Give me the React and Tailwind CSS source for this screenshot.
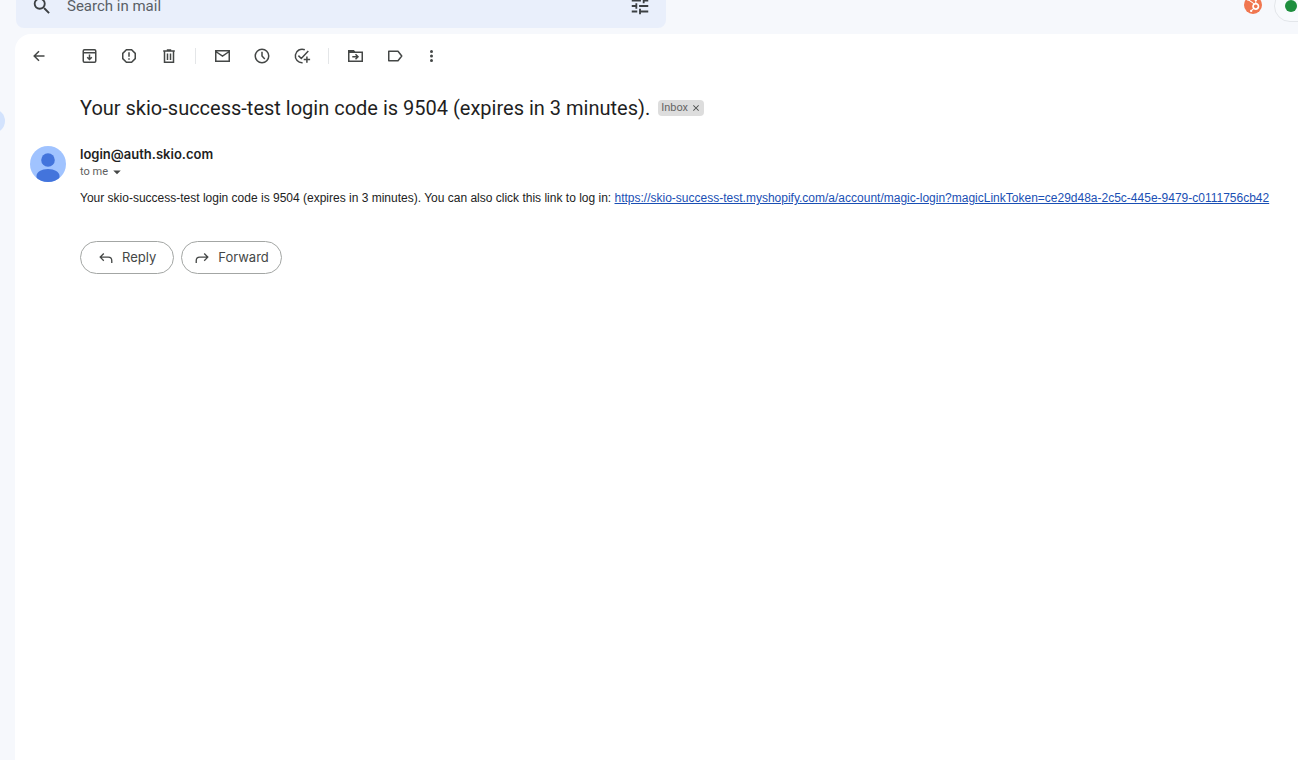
import React, { useState } from "react";
import { FaHubspot } from "react-icons/fa";
import { MdSearch, MdTune, MdArrowDropDown, MdClose } from "react-icons/md";

const Icon = ({ children, size = "size-[18px]" }) => (
  <svg
    viewBox="0 0 18 18"
    className={`${size} shrink-0`}
    fill="none"
    stroke="currentColor"
    strokeWidth="1.5"
    aria-hidden="true"
  >
    {children}
  </svg>
);

const BackIcon = () => (
  <Icon>
    <path d="M14.5 9H4.2M9 4.2L4.2 9 9 13.8" />
  </Icon>
);

const ArchiveIcon = () => (
  <Icon>
    <rect x="3.25" y="2.75" width="12.5" height="12.5" rx="1.2" />
    <path d="M3.25 5.75h12.5M9.5 7.6v4.6M7.2 10.2l2.3 2.2 2.3-2.2" />
  </Icon>
);

const SpamIcon = () => (
  <Icon>
    <path d="M6.4 2.75h5.2l3.65 3.65v5.2l-3.65 3.65H6.4L2.75 11.6V6.4L6.4 2.75zM9 5.2v4.6M9 11.2v1.6" />
  </Icon>
);

const TrashIcon = () => (
  <Icon>
    <path d="M4.5 4.5v10.75h9V4.5M3.2 4h11.6M6.8 3h4.4M7.5 6.5v6.5M10.5 6.5v6.5" />
  </Icon>
);

const MailIcon = () => (
  <Icon>
    <path d="M2.75 3.75h13.5v10.5H2.75zM2.75 4.5L9.5 9l6.75-4.5" />
  </Icon>
);

const ClockIcon = () => (
  <Icon>
    <circle cx="9" cy="9" r="6.75" />
    <path d="M9 4.8V9l2.8 2.9" />
  </Icon>
);

const TaskIcon = () => (
  <Icon>
    <path d="M11.8 2.8A6.75 6.75 0 1 0 9.6 15.7M5.4 8.6l2.9 2.9 7-7.6M13.9 9.4v6.4M10.7 12.6h6.4" />
  </Icon>
);

const MoveIcon = () => (
  <Icon>
    <path d="M2.75 5.25h13.5v9H2.75V3.75H7.5L9 5.25M6.3 9.8h5.4M9.5 7.3l2.5 2.5-2.5 2.5" />
    <path d="M2.5 3.5h5.2L9.3 6H2.5z" fill="currentColor" stroke="none" />
  </Icon>
);

const LabelIcon = () => (
  <Icon>
    <path d="M2.75 4.25H12L15.75 9 12 13.75H2.75z" strokeLinejoin="round" />
  </Icon>
);

const MoreIcon = () => (
  <Icon>
    <g fill="currentColor" stroke="none">
      <circle cx="9.5" cy="4.6" r="1.5" />
      <circle cx="9.5" cy="9" r="1.5" />
      <circle cx="9.5" cy="13.4" r="1.5" />
    </g>
  </Icon>
);

const ReplyIcon = () => (
  <Icon size="size-4">
    <path d="M6.5 4L2.5 8l4 4M2.5 8h9q4 0 4 4v2.5" />
  </Icon>
);

const ForwardIcon = () => (
  <Icon size="size-4">
    <path d="M11.5 4l4 4-4 4M15.5 8h-9q-4 0-4 4v2.5" />
  </Icon>
);

const ToolButton = ({ label, children }) => (
  <button type="button" aria-label={label} className="flex text-[#444746]">
    {children}
  </button>
);

const Divider = () => <span className="mx-[17px] h-4 w-px bg-[#e4e6e8]" />;

const Header = () => {
  const [search, setSearch] = useState("");

  return (
    <header className="flex h-[34px] items-end justify-between overflow-hidden pl-4">
      <form className="mb-1.5 flex h-11 w-[650px] items-center rounded-lg bg-[#e9effb] px-[15px] text-[#3c4043]">
        <button type="submit" aria-label="Search" className="flex">
          <MdSearch className="size-[22px]" />
        </button>
        <input
          type="text"
          aria-label="Search in mail"
          placeholder="Search in mail"
          value={search}
          onChange={(e) => setSearch(e.target.value)}
          className="ml-3.5 min-w-0 flex-1 font-['Roboto',sans-serif] text-[15px] outline-none placeholder:text-[#5a5f66]"
        />
        <button type="button" aria-label="Search options" className="flex">
          <MdTune className="size-[22px]" />
        </button>
      </form>
      <div className="mb-3 flex items-end gap-3">
        <button
          type="button"
          aria-label="HubSpot"
          className="mb-2 flex size-[18px] items-center justify-center rounded-full bg-[#f0764f] text-white"
        >
          <FaHubspot className="size-3.5" />
        </button>
        <button
          type="button"
          aria-label="Status"
          className="-mr-8 flex h-8 w-14 items-center rounded-full border border-[#e3e6ea] bg-[#f8fafd] pl-2.5"
        >
          <span className="size-3 rounded-full bg-[#1e8e3e]" />
        </button>
      </div>
    </header>
  );
};

const Toolbar = () => (
  <div className="flex h-11 items-center pl-[15px]">
    <ToolButton label="Back"><BackIcon /></ToolButton>
    <div className="ml-8 flex items-center gap-[22px]">
      <ToolButton label="Archive"><ArchiveIcon /></ToolButton>
      <ToolButton label="Report spam"><SpamIcon /></ToolButton>
      <ToolButton label="Delete"><TrashIcon /></ToolButton>
    </div>
    <Divider />
    <div className="flex items-center gap-[22px]">
      <ToolButton label="Mark as unread"><MailIcon /></ToolButton>
      <ToolButton label="Snooze"><ClockIcon /></ToolButton>
      <ToolButton label="Add to tasks"><TaskIcon /></ToolButton>
    </div>
    <Divider />
    <div className="flex items-center gap-[22px]">
      <ToolButton label="Move to"><MoveIcon /></ToolButton>
      <ToolButton label="Labels"><LabelIcon /></ToolButton>
    </div>
    <div className="ml-[18px] flex">
      <ToolButton label="More"><MoreIcon /></ToolButton>
    </div>
  </div>
);

const Avatar = () => (
  <svg viewBox="0 0 36 36" className="size-9 shrink-0 rounded-full" aria-hidden="true">
    <rect width="36" height="36" fill="#a0c3ff" />
    <circle cx="18" cy="14" r="6.8" fill="#4374dc" />
    <path d="M6.5 36v-6c0-4 5-7 11.5-7s11.5 3 11.5 7v6z" fill="#4374dc" />
  </svg>
);

const Message = () => (
  <article className="mt-6 flex pr-4 pl-[15px]">
    <Avatar />
    <div className="ml-3.5 min-w-0 flex-1">
      <h2 className="font-['Inter',sans-serif] text-[13px] leading-4 font-semibold text-[#1f1f1f]">
        login@auth.skio.com
      </h2>
      <button
        type="button"
        className="flex items-center font-['Roboto',sans-serif] text-[11px] leading-5 text-[#5e5e5e]"
      >
        to me
        <MdArrowDropDown className="size-[18px] text-[#444746]" />
      </button>
      <p className="mt-2 font-['Liberation_Sans',Arial,sans-serif] text-[12px] leading-4 text-[#222]">
        Your skio-success-test login code is 9504 (expires in 3 minutes). You can also click this link to log in:{" "}
        <a
          href="https://skio-success-test.myshopify.com/a/account/magic-login?magicLinkToken=ce29d48a-2c5c-445e-9479-c0111756cb42"
          className="break-words text-[#1a4fb4] underline"
        >
          https://skio-success-test.myshopify.com/a/account/magic-login?magicLinkToken=ce29d48a-2c5c-445e-9479-c0111756cb42
        </a>
      </p>
      <div className="mt-[35px] flex gap-[7px] font-['Inter',sans-serif] text-[13px] text-[#444746]">
        <button type="button" className="flex h-[33px] items-center gap-2 rounded-full border border-[#a3a6a4] px-[17px]">
          <ReplyIcon />
          Reply
        </button>
        <button type="button" className="flex h-[33px] items-center gap-2 rounded-full border border-[#a3a6a4] px-3">
          <ForwardIcon />
          Forward
        </button>
      </div>
    </div>
  </article>
);

const App = () => {
  return (
    <div className="flex min-h-screen flex-col bg-[#f6f8fc]">
      <Header />
      <div className="flex flex-1">
        <aside className="w-[15px] shrink-0 overflow-hidden pt-[75px]">
          <div className="-ml-[27px] h-6 w-8 rounded-full bg-[#d3e3fd]" />
        </aside>
        <main className="min-w-0 flex-1 rounded-tl-2xl bg-white">
          <Toolbar />
          <div className="mt-4 flex items-center gap-2 pl-[65px]">
            <h1 className="font-['Roboto',sans-serif] text-[20px] leading-7 text-[#1f1f1f]">
              Your skio-success-test login code is 9504 (expires in 3 minutes).
            </h1>
            <span className="flex h-4 items-center gap-[3px] rounded bg-[#ddd] px-[3px] font-['Roboto',sans-serif] text-[11px] text-[#666]">
              Inbox
              <button type="button" aria-label="Remove label Inbox" className="flex text-[#444746]">
                <MdClose className="size-2.5" />
              </button>
            </span>
          </div>
          <Message />
        </main>
      </div>
    </div>
  );
};

export default App;
